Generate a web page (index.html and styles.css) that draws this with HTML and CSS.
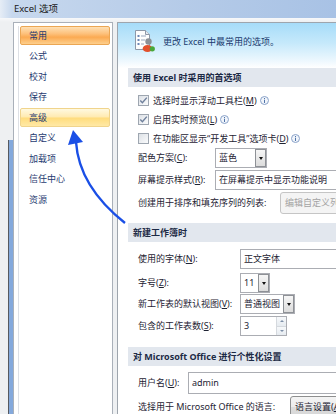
FILE: index.html
```html
<!DOCTYPE html>
<html lang="zh-CN">
<head>
<meta charset="utf-8">
<title>Excel 选项</title>
<link rel="stylesheet" href="styles.css">
</head>
<body>
<div class="window">
  <div class="titlebar"><span class="title">Excel 选项</span></div>
  <div class="client">
    <div class="edge"><div class="edge-strip"></div></div>
    <nav class="nav">
      <ul class="nav-list">
        <li class="nav-item selected">常用</li>
        <li class="nav-item">公式</li>
        <li class="nav-item">校对</li>
        <li class="nav-item">保存</li>
        <li class="nav-item hover">高级</li>
        <li class="nav-item">自定义</li>
        <li class="nav-item">加载项</li>
        <li class="nav-item">信任中心</li>
        <li class="nav-item">资源</li>
      </ul>
    </nav>
    <div class="divider"></div>
    <main class="pane">
      <div class="pane-head">
        <svg class="head-icon" width="23" height="24" viewBox="0 0 23 24">
          <path d="M2.5 1.5 H12.5 L16.5 5.5 V20.5 H2.5 Z" fill="#fdfdfd" stroke="#8d98a8"/>
          <path d="M12.5 1.5 V5.5 H16.5" fill="#e4e9f0" stroke="#8d98a8"/>
          <rect x="4.5" y="6" width="2" height="2" fill="#6b86b5"/>
          <rect x="8" y="6.5" width="5" height="1" fill="#9aa8bd"/>
          <rect x="4.5" y="10" width="2" height="2" fill="#6b86b5"/>
          <rect x="8" y="10.5" width="4" height="1" fill="#9aa8bd"/>
          <rect x="4.5" y="14" width="2" height="2" fill="#6b86b5"/>
          <rect x="8" y="14.5" width="3" height="1" fill="#9aa8bd"/>
          <circle cx="15.5" cy="12.5" r="3.2" fill="#8b9097"/>
          <ellipse cx="14.5" cy="19.5" rx="4.8" ry="3.6" fill="#e2502c"/>
          <circle cx="19.3" cy="19.8" r="2.6" fill="#49a83a"/>
        </svg>
        <span class="head-text">更改 Excel 中最常用的选项。</span>
      </div>

      <section class="section first">
        <div class="section-title">使用 Excel 时采用的首选项</div>
        <div class="checks">
          <div class="check-row">
            <span class="checkbox checked"><svg width="9" height="9" viewBox="0 0 9 9"><path d="M1.3 4.6 L3.4 6.8 L7.8 1.6" fill="none" stroke="#6e7f9b" stroke-width="1.4"/></svg></span>
            <span>选择时显示浮动工具栏(<u>M</u>)</span>
            <svg class="info" width="9" height="9" viewBox="0 0 9 9"><circle cx="4.5" cy="4.5" r="4" fill="#f1f5fb" stroke="#8aa2c8"/><rect x="4" y="2" width="1" height="1" fill="#4f73a8"/><rect x="4" y="3.7" width="1" height="3.3" fill="#4f73a8"/></svg>
          </div>
          <div class="check-row">
            <span class="checkbox checked"><svg width="9" height="9" viewBox="0 0 9 9"><path d="M1.3 4.6 L3.4 6.8 L7.8 1.6" fill="none" stroke="#6e7f9b" stroke-width="1.4"/></svg></span>
            <span>启用实时预览(<u>L</u>)</span>
            <svg class="info" width="9" height="9" viewBox="0 0 9 9"><circle cx="4.5" cy="4.5" r="4" fill="#f1f5fb" stroke="#8aa2c8"/><rect x="4" y="2" width="1" height="1" fill="#4f73a8"/><rect x="4" y="3.7" width="1" height="3.3" fill="#4f73a8"/></svg>
          </div>
          <div class="check-row">
            <span class="checkbox"></span>
            <span>在功能区显示“开发工具”选项卡(<u>D</u>)</span>
            <svg class="info" width="9" height="9" viewBox="0 0 9 9"><circle cx="4.5" cy="4.5" r="4" fill="#f1f5fb" stroke="#8aa2c8"/><rect x="4" y="2" width="1" height="1" fill="#4f73a8"/><rect x="4" y="3.7" width="1" height="3.3" fill="#4f73a8"/></svg>
          </div>
        </div>
        <div class="field-row scheme-row">
          <span class="label label-a">配色方案(<u>C</u>):</span>
          <div class="box select scheme"><span class="value">蓝色</span><span class="drop-btn"><i class="tri"></i></span></div>
        </div>
        <div class="field-row tip-row">
          <span class="label label-a">屏幕提示样式(<u>R</u>):</span>
          <div class="box wide"><span class="value">在屏幕提示中显示功能说明</span></div>
        </div>
        <div class="field-row list-row">
          <span class="label label-b">创建用于排序和填充序列的列表:</span>
          <div class="btn disabled">编辑自定义列表(<u>O</u>)...</div>
        </div>
      </section>

      <section class="section second">
        <div class="section-title">新建工作簿时</div>
        <div class="field-row font-row">
          <span class="label label-c">使用的字体(<u>N</u>):</span>
          <div class="box wide"><span class="value">正文字体</span></div>
        </div>
        <div class="field-row size-row">
          <span class="label label-c">字号(<u>Z</u>):</span>
          <div class="box select size"><span class="value">11</span><span class="drop-btn"><i class="tri"></i></span></div>
        </div>
        <div class="field-row view-row">
          <span class="label label-c">新工作表的默认视图(<u>V</u>):</span>
          <div class="box select view"><span class="value">普通视图</span><span class="drop-btn"><i class="tri"></i></span></div>
        </div>
        <div class="field-row sheets-row">
          <span class="label label-c">包含的工作表数(<u>S</u>):</span>
          <div class="box spin"><span class="value">3</span><span class="spin-btns"><span class="spin-up"><i class="tri-up"></i></span><span class="spin-down"><i class="tri-down"></i></span></span></div>
        </div>
      </section>

      <section class="section third">
        <div class="section-title">对 Microsoft Office 进行个性化设置</div>
        <div class="field-row user-row">
          <span class="label label-d">用户名(<u>U</u>):</span>
          <div class="box wide"><span class="value">admin</span></div>
        </div>
        <div class="field-row lang-row">
          <span class="label label-e">选择用于 Microsoft Office 的语言:</span>
          <div class="btn">语言设置(<u>A</u>)...</div>
        </div>
      </section>
    </main>
  </div>
  <svg class="arrow" width="336" height="414" viewBox="0 0 336 414">
    <path d="M125 223 Q79 186.5 76 142" fill="none" stroke="#1a4fe6" stroke-width="2.4"/>
    <polygon points="73,130 68,145 83,142" fill="#1a4fe6"/>
  </svg>
</div>
</body>
</html>
```

FILE: styles.css
```css
* { box-sizing: border-box; }

body {
  margin: 0;
  background: #f0f0f0;
  font-family: "Noto Sans", "Noto Sans CJK SC", sans-serif;
  font-size: 9px;
  color: #1e2333;
}

.window {
  position: relative;
  width: 336px;
  height: 414px;
  overflow: hidden;
  display: flex;
  flex-direction: column;
  background: #f2f3f5;
}

.titlebar {
  height: 18px;
  flex: none;
  display: flex;
  align-items: center;
  padding-left: 14px;
  background: linear-gradient(90deg, #e6edf6 0, #c7d8ee 12px, #b5cbe8 55%, #a8c2e5 100%);
  color: #1a1a1a;
  font-size: 9.5px;
  line-height: 12px;
}

.client {
  flex: 1;
  min-height: 0;
  display: flex;
  padding-top: 4px;
  background: linear-gradient(#f7f8fa, #eef0f2 4px);
}

.edge {
  width: 13px;
  flex: none;
  display: flex;
  flex-direction: column;
}

.edge-strip {
  margin-top: 118px;
  margin-left: 8px;
  width: 5px;
  flex: 1;
  border-left: 1px solid #565a61;
  background: #84a9dc;
}

.nav {
  width: 100px;
  flex: none;
  border: 1px solid #a9b0b9;
  border-bottom: none;
  background: #fff;
  padding: 3px 2px 0 4px;
}

.nav-list {
  list-style: none;
  margin: 0;
  padding: 0 0 0 1px;
  height: 100%;
  border-left: 1px solid #dde0e5;
}

.nav-item {
  height: 19px;
  margin-bottom: 1.5px;
  border: 1px solid transparent;
  border-radius: 2px;
  padding-left: 8px;
  display: flex;
  align-items: center;
  color: #1f3b70;
  line-height: 12px;
}

.nav-item.selected {
  background: linear-gradient(#fee0b4 0%, #fdc07a 40%, #fbaa52 60%, #fdcf8c 100%);
  border-color: #eba653;
}

.nav-item.hover {
  background: linear-gradient(#fff9e0 0%, #ffeab0 48%, #ffdc7c 52%, #ffe9a6 100%);
  border-color: #f0d48c;
}

.divider {
  width: 4px;
  flex: none;
}

.pane {
  flex: 1;
  min-width: 0;
  border-left: 1px solid #9ea5ad;
  border-top: 1px solid #9ea5ad;
  background: #fff;
  overflow: hidden;
  display: flex;
  flex-direction: column;
  line-height: 12px;
}

.pane-head {
  height: 45px;
  flex: none;
  display: flex;
  align-items: flex-start;
  gap: 7px;
  padding-left: 15px;
  background: linear-gradient(#a6dcf9 0%, #c6e9fb 45%, #eef8fe 85%, #ffffff 100%);
  color: #203a6d;
}

.head-icon {
  margin-top: 6px;
  flex: none;
}

.head-text {
  margin-top: 13px;
}

.section {
  flex: none;
  padding-left: 10px;
}

.second { margin-top: 9px; }
.third { margin-top: 11px; }

.section-title {
  height: 19px;
  display: flex;
  align-items: center;
  padding-left: 5px;
  background: #e2e7ee;
  font-weight: bold;
  color: #1c2a45;
  white-space: nowrap;
}

.checks {
  margin-top: 4px;
  padding-left: 10px;
}

.check-row {
  height: 19px;
  display: flex;
  align-items: center;
  gap: 4px;
  white-space: nowrap;
}

.checkbox {
  width: 11px;
  height: 11px;
  flex: none;
  border: 1px solid #9ea6b0;
  background: linear-gradient(135deg, #dde1e6, #fafbfc);
  display: flex;
  align-items: center;
  justify-content: center;
}

.info {
  flex: none;
  margin-left: -1px;
}

.field-row {
  display: flex;
  align-items: center;
  height: 20px;
  padding-left: 10px;
  white-space: nowrap;
}

.tip-row { margin-top: 2px; }
.list-row { margin-top: 2px; height: 22px; }
.font-row { margin-top: 7px; }
.size-row { margin-top: 4px; }
.view-row { margin-top: 1px; }
.sheets-row { margin-top: 2px; }
.user-row { margin-top: 6px; height: 22px; }
.lang-row { margin-top: 2px; height: 22px; }

.label { flex: none; }
.label-a { width: 77px; }
.label-b { width: 142px; }
.label-c { width: 102px; }
.label-d { width: 50px; }
.label-e { width: 152px; }

.box {
  height: 100%;
  border: 1px solid #abadb3;
  background: #fff;
  display: flex;
  align-items: center;
  flex: none;
}

.box .value {
  flex: 1;
  padding-left: 3px;
  min-width: 0;
  overflow: hidden;
}

.wide { width: 200px; }
.scheme { width: 52px; }
.size { width: 30px; }
.view { width: 55px; }
.spin { width: 47px; }

.drop-btn {
  width: 11px;
  height: 100%;
  flex: none;
  border: 1px solid #8e9196;
  background: linear-gradient(#f6f6f6, #dcdcdc);
  display: flex;
  align-items: center;
  justify-content: center;
}

.tri {
  width: 0;
  height: 0;
  border-left: 2.5px solid transparent;
  border-right: 2.5px solid transparent;
  border-top: 3px solid #111;
}

.spin-btns {
  width: 10px;
  height: 100%;
  flex: none;
  display: flex;
  flex-direction: column;
  border-left: 1px solid #d5d9de;
}

.spin-up, .spin-down {
  flex: 1;
  display: flex;
  align-items: center;
  justify-content: center;
  background: linear-gradient(#f7f9fb, #e6ebf0);
}

.spin-up { border-bottom: 1px solid #d5d9de; }

.tri-up, .tri-down {
  width: 0;
  height: 0;
  border-left: 2px solid transparent;
  border-right: 2px solid transparent;
}

.tri-up { border-bottom: 2px solid #7d8fa8; }
.tri-down { border-top: 2px solid #7d8fa8; }

.btn {
  height: 100%;
  width: 80px;
  flex: none;
  display: flex;
  align-items: center;
  padding-left: 4px;
  border: 1px solid #8e8f8f;
  border-radius: 3px;
  background: linear-gradient(#f4f4f4 0%, #ececec 50%, #dddddd 51%, #d6d6d6 100%);
  color: #1e2333;
}

.btn.disabled {
  border-color: #c5c5c5;
  background: #f4f4f4;
  color: #a3a3a3;
}

.arrow {
  position: absolute;
  left: 0;
  top: 0;
  pointer-events: none;
}
```
